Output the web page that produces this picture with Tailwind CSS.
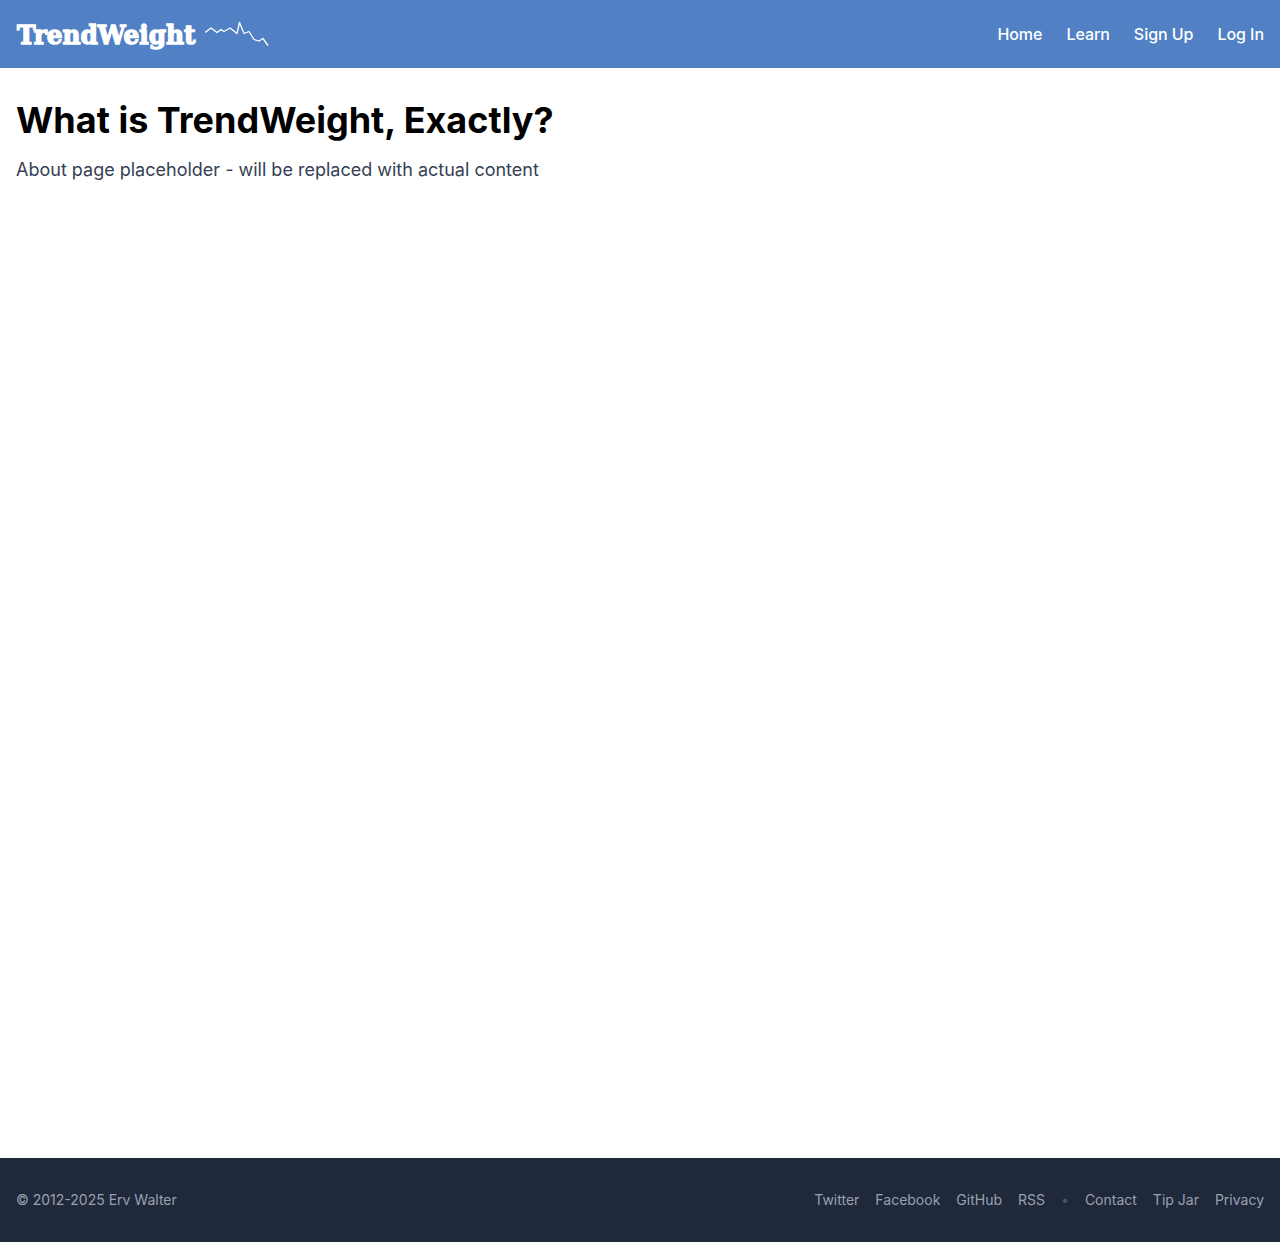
<!DOCTYPE html>
<html lang="en">
<head>
<meta charset="utf-8">
<title>TrendWeight</title>
<script src="https://cdn.jsdelivr.net/npm/@tailwindcss/browser@4"></script>
</head>
<body class="flex min-h-screen flex-col bg-white font-['Inter',sans-serif] antialiased">
<header class="flex h-[68px] items-center justify-between bg-[#5180c4] px-4 text-white">
<a href="#" class="flex items-center gap-2">
<svg class="h-11 w-[181px] overflow-visible" viewBox="0 0 181 44"><text x="1" y="31.500" textLength="178.500" lengthAdjust="spacingAndGlyphs" font-size="26.500" font-weight="700" fill="#fff" stroke="#fff" stroke-width="1.4" class="font-['DejaVu_Serif',serif]">TrendWeight</text></svg>
<svg class="h-[26px] w-16" viewBox="0 0 64 26" fill="none" stroke="#fff" stroke-width="1.3" stroke-linejoin="round"><path d="M0 11.500 6 7 12 11.500 16 8.500 19 10.500 25 7 32 12.500 34.500 1.500 39 12.500 44 10.500 49 18.500 54 20 58 17.500 63 24.500"/></svg>
</a>
<nav class="flex gap-6 text-base font-medium tracking-[-0.05px]"><a href="#">Home</a><a href="#">Learn</a><a href="#">Sign Up</a><a href="#">Log In</a></nav>
</header>
<main class="flex-1 px-4 pt-8">
<h1 class="mb-4 text-4xl font-bold leading-10 text-black">What is TrendWeight, Exactly?</h1>
<p class="text-lg text-gray-700">About page placeholder - will be replaced with actual content</p>
</main>
<footer class="flex h-[84px] items-center justify-between bg-[#20283b] px-4 text-sm text-gray-400">
<p>© 2012-2025 Erv Walter</p>
<nav class="flex gap-4"><a href="#">Twitter</a><a href="#">Facebook</a><a href="#">GitHub</a><a href="#">RSS</a><span class="text-gray-600">•</span><a href="#">Contact</a><a href="#">Tip Jar</a><a href="#">Privacy</a></nav>
</footer>
</body>
</html>
